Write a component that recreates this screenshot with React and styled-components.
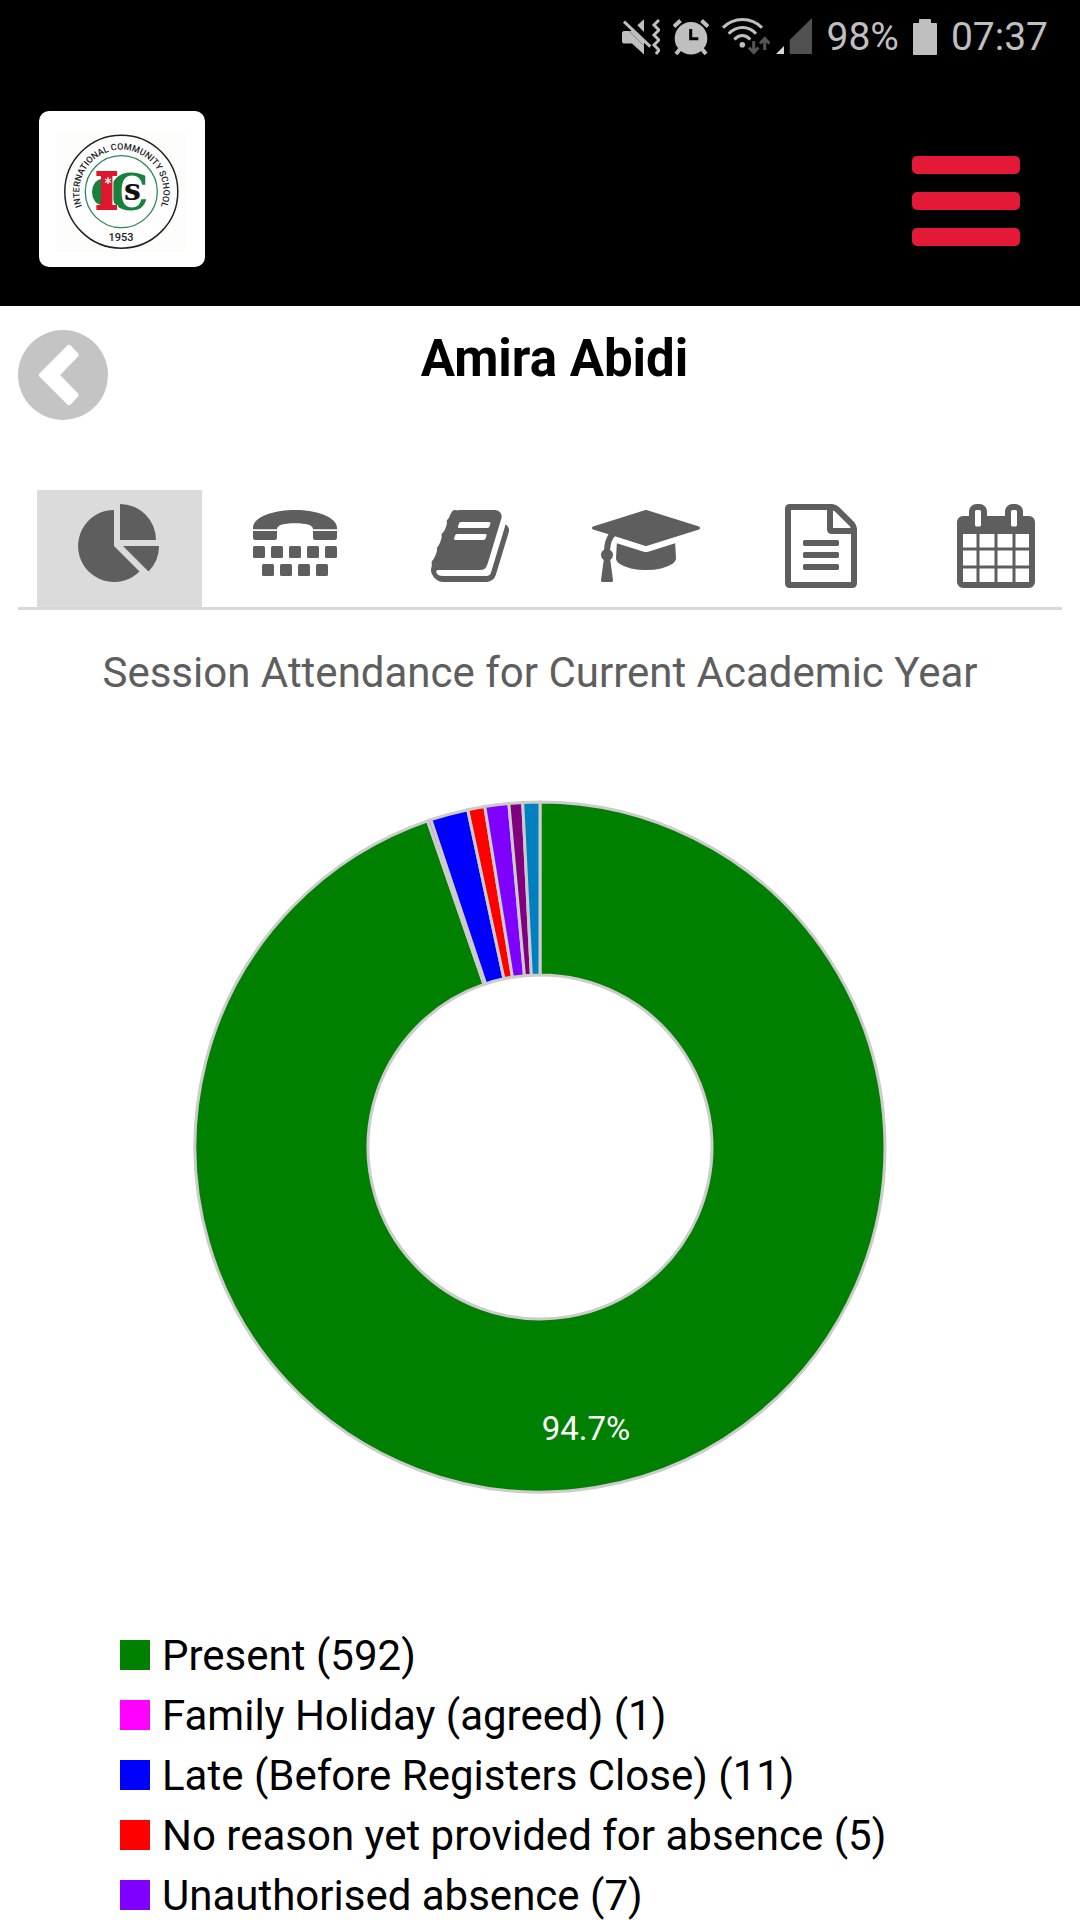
import React, { Component } from 'react';

import styled, { createGlobalStyle, css } from 'styled-components';

const slices = [
  { label: 'Present', count: 592, color: '#008000' },
  { label: 'Family Holiday (agreed)', count: 1, color: '#ff00ff' },
  { label: 'Late (Before Registers Close)', count: 11, color: '#0000ff' },
  { label: 'No reason yet provided for absence', count: 5, color: '#ff0000' },
  { label: 'Unauthorised absence', count: 7, color: '#7f00ff' },
  { count: 4, color: '#800080' },
  { count: 5, color: '#0080c0' },
];

const OUTER = 345;
const INNER = 172;

const point = (r, turn) => {
  const a = turn * 2 * Math.PI;
  return `${(r * Math.sin(a)).toFixed(2)} ${(-r * Math.cos(a)).toFixed(2)}`;
};

const ringPath = (from, to) => {
  const large = to - from > 0.5 ? 1 : 0;
  return `M${point(OUTER, from)} A${OUTER} ${OUTER} 0 ${large} 1 ${point(OUTER, to)}
    L${point(INNER, to)} A${INNER} ${INNER} 0 ${large} 0 ${point(INNER, from)} Z`;
};

const MuteIcon = () => (
  <svg width="38" height="38" viewBox="0 0 38 38" fill="#bfbfbf" aria-hidden="true">
    <path d="M1.5 13H7L22 28v8.5L10 25.5H1.5L0 24V14.5z" />
    <path d="M7 13l15 15V23L12 13z" />
    <path d="M22 1.3V14l-6.7-6.7z" />
    <path d="M2 3.7l26.3 25" stroke="#bfbfbf" strokeWidth="3" />
    <path d="M37 2l-5 5 5 5-5 5 5 5-5 5 5 5-3 4" fill="none" stroke="#bfbfbf" strokeWidth="3" />
  </svg>
);

const AlarmIcon = () => (
  <svg width="36" height="38" viewBox="0 0 36 38" aria-hidden="true">
    <circle cx="18" cy="20.3" r="16.3" fill="#bfbfbf" />
    <path d="M1 8.5l6.5-6M28.5 2.5l6.5 6M7 31l-4 5M29 31l4 5" stroke="#bfbfbf" strokeWidth="4" />
    <path d="M17.7 11v9.7h7.6" fill="none" stroke="#000" strokeWidth="3" />
  </svg>
);

const WifiIcon = () => (
  <svg width="48" height="38" viewBox="0 0 48 38" fill="none" aria-hidden="true">
    <path
      d="M1 9.7Q9 1.5 20.5 1.5T40 9.7M6.7 15.7Q12.5 9.5 20.5 9.5T34 15.7M12.3 21.5Q16 17.5 20.3 17.5T28.3 21.5"
      stroke="#bfbfbf"
      strokeWidth="3"
    />
    <circle cx="20.3" cy="26.7" r="2.8" fill="#bfbfbf" />
    <path d="M31.7 23v11M27 29.5l4.7 5 4.7-5M42.7 32V21M38 25.5l4.7-5 4.7 5" stroke="#555" strokeWidth="3" />
  </svg>
);

const SignalIcon = () => (
  <svg width="36" height="38" viewBox="0 0 36 38" aria-hidden="true">
    <path d="M0 36h8v-8z" fill="#d8d8d8" />
    <path d="M13.7 36V22L36 0v36z" fill="#505050" />
  </svg>
);

const BatteryIcon = () => (
  <svg width="24" height="38" viewBox="0 0 24 38" fill="#bfbfbf" aria-hidden="true">
    <rect y="5" width="24" height="32" rx="1" />
    <rect x="6" y="1" width="12" height="6" rx="1" />
  </svg>
);

const SchoolLogo = () => (
  <svg width="166" height="156" viewBox="0 0 166 156" role="img" aria-label="International Community School">
    <defs>
      <path id="motto" d="M82.3 122.7a42 42 0 1 1 .1 0" />
    </defs>
    <rect x="18" y="20" width="128" height="121" fill="#fdfdfb" />
    <circle cx="82.3" cy="80.7" r="56.5" fill="#fff" stroke="#222" strokeWidth="1.5" />
    <circle cx="82.3" cy="80.7" r="36" fill="#fff" stroke="#2f8a58" strokeWidth="1.3" />
    <Motto>
      <textPath href="#motto" startOffset="50%">INTERNATIONAL COMMUNITY SCHOOL</textPath>
    </Motto>
    <Year x="82" y="130">1953</Year>
    <ellipse cx="63" cy="81" rx="10" ry="13" fill="#17823c" />
    <Initial x="70" y="99" $size={50} $color="#17823c">C</Initial>
    <Initial x="56" y="98" $size={50} $color="#e0162f" $heavy>I</Initial>
    <Initial x="85" y="89" $size={30} $color="#111111">s</Initial>
    <path d="M69 66v7M66 68l6 3.5M72 68l-6 3.5" stroke="#fff" strokeWidth="1.3" />
  </svg>
);

const ChevronIcon = () => (
  <svg width="90" height="90" viewBox="0 0 90 90" aria-hidden="true">
    <path d="M24 45l27-27 6.5 7L38 45l19.5 20-6.5 7z" fill="#fff" stroke="#fff" strokeWidth="6" strokeLinejoin="round" />
  </svg>
);

const PieIcon = () => (
  <svg width="108" height="84" viewBox="0 0 108 84" fill="currentColor" aria-hidden="true">
    <path d="M48 42V6a36 36 0 1 0 25.5 61.5z" />
    <path d="M54 0a36 36 0 0 1 36 36H54z" />
    <path d="M57 42h36a36 36 0 0 1-10.5 25.5z" />
  </svg>
);

const TtyIcon = () => (
  <svg width="84" height="84" viewBox="12 0 84 84" fill="currentColor" aria-hidden="true">
    <path d="M12 25.3V23C13 13 32 6 54 6s41 7 42 17v2.3H72c0-4-6-6-18-6s-18 2-18 6z" />
    <path d="M12 27h24v6.5q0 2.5-2.5 2.5h-19Q12 36 12 33.5zM72 27h24v6.5q0 2.5-2.5 2.5h-19Q72 36 72 33.5z" />
    {[12, 30, 48, 66, 84].map(x => <rect key={x} x={x} y="42" width="12" height="12" rx="1.5" />)}
    {[21, 39, 57, 75].map(x => <rect key={x} x={x} y="60" width="12" height="12" rx="1.5" />)}
  </svg>
);

const BookIcon = () => (
  <svg width="78" height="84" viewBox="0 0 1664 1792" fill="currentColor" aria-hidden="true">
    <path d="M1639 478q40 57 18 129l-275 906q-19 64-76.5 107.5t-122.5 43.5h-923q-77 0-148.5-53.5t-99.5-131.5q-24-67-2-127 0-4 3-27t4-37q1-8-3-21.5t-3-19.5q2-11 8-21t16.5-23.5 16.5-23.5q23-38 45-91.5t30-91.5q3-10 .5-30t-.5-28q3-11 17-28t17-23q21-36 42-92t25-90q1-9-2.5-32t.5-28q4-13 22-30.5t22-22.5q19-26 42.5-84.5t27.5-96.5q1-8-3-25.5t-2-26.5q2-8 9-18t18-23 17-21q8-12 16.5-30.5t15-35 16-36 19.5-32 26.5-23.5 36-11.5 47.5 5.5l-1 3q38-9 51-9h761q74 0 114 56t18 130l-274 906q-36 119-71.5 153.5t-128.5 34.5h-869q-27 0-38 15-11 16-1 43 24 70 144 70h923q29 0 56-15.5t35-41.5l300-987q7-22 5-57 38 15 59 43zm-1064 2q-4 13 2 22.5t20 9.5h608q13 0 25.5-9.5t16.5-22.5l21-64q4-13-2-22.5t-20-9.5h-608q-13 0-25.5 9.5t-16.5 22.5zm-83 256q-4 13 2 22.5t20 9.5h608q13 0 25.5-9.5t16.5-22.5l21-64q4-13-2-22.5t-20-9.5h-608q-13 0-25.5 9.5t-16.5 22.5z" />
  </svg>
);

const CapIcon = () => (
  <svg width="108" height="84" viewBox="0 0 2304 1792" fill="currentColor" aria-hidden="true">
    <path d="M1774 836l18 316q4 69-82 128t-235 93.5-323 34.5-323-34.5-235-93.5-82-128l18-316 574 181q22 7 48 7t48-7zm530-324q0 23-22 31l-1120 352q-4 1-10 1t-10-1l-652-206q-43 34-71 111.5t-34 178.5q63 36 63 109 0 69-58 107l58 433q2 14-8 25-9 11-24 11h-192q-15 0-24-11-10-11-8-25l58-433q-58-38-58-107 0-73 65-111 11-207 98-330l-333-104q-22-8-22-31t22-31l1120-352q4-1 10-1t10 1l1120 352q22 8 22 31z" />
  </svg>
);

const FileIcon = () => (
  <svg width="72" height="84" viewBox="0 0 1536 1792" fill="currentColor" aria-hidden="true">
    <path d="M1468 380q28 28 48 76t20 88v1152q0 40-28 68t-68 28h-1344q-40 0-68-28t-28-68v-1600q0-40 28-68t68-28h896q40 0 88 20t76 48zm-444-244v376h376q-10-29-22-41l-313-313q-12-12-41-22zm384 1528v-1024h-416q-40 0-68-28t-28-68v-416h-768v1536h1280zm-1024-864q0-14 9-23t23-9h704q14 0 23 9t9 23v64q0 14-9 23t-23 9h-704q-14 0-23-9t-9-23v-64zm736 224q14 0 23 9t9 23v64q0 14-9 23t-23 9h-704q-14 0-23-9t-9-23v-64q0-14 9-23t23-9h704zm0 256q14 0 23 9t9 23v64q0 14-9 23t-23 9h-704q-14 0-23-9t-9-23v-64q0-14 9-23t23-9h704z" />
  </svg>
);

const CalendarIcon = () => (
  <svg width="78" height="84" viewBox="0 0 1664 1792" fill="currentColor" aria-hidden="true">
    <path d="M128 1664h288v-288h-288v288zm352 0h320v-288h-320v288zm-352-352h288v-320h-288v320zm352 0h320v-320h-320v320zm-352-384h288v-288h-288v288zm736 736h320v-288h-320v288zm-384-736h320v-288h-320v288zm768 736h288v-288h-288v288zm-384-352h320v-320h-320v320zm-352-864v-288q0-13-9.5-22.5t-22.5-9.5h-64q-13 0-22.5 9.5t-9.5 22.5v288q0 13 9.5 22.5t22.5 9.5h64q13 0 22.5-9.5t9.5-22.5zm736 864h288v-320h-288v320zm-384-384h320v-288h-320v288zm384 0h288v-288h-288v288zm32-480v-288q0-13-9.5-22.5t-22.5-9.5h-64q-13 0-22.5 9.5t-9.5 22.5v288q0 13 9.5 22.5t22.5 9.5h64q13 0 22.5-9.5t9.5-22.5zm384-64v1280q0 52-38 90t-90 38h-1408q-52 0-90-38t-38-90v-1280q0-52 38-90t90-38h128v-96q0-66 47-113t113-47h64q66 0 113 47t47 113v96h384v-96q0-66 47-113t113-47h64q66 0 113 47t47 113v96h128q52 0 90 38t38 90z" />
  </svg>
);

const tabs = [
  { name: 'Attendance', Icon: PieIcon },
  { name: 'Contacts', Icon: TtyIcon },
  { name: 'Homework', Icon: BookIcon },
  { name: 'Assessment', Icon: CapIcon },
  { name: 'Reports', Icon: FileIcon },
  { name: 'Calendar', Icon: CalendarIcon },
];

const DonutChart = ({ data }) => {
  const total = data.reduce((sum, s) => sum + s.count, 0);
  let turn = 0;

  return (
    <Chart viewBox="-347 -347 694 694" role="img" aria-label="Session attendance">
      {data.map(s => {
        const from = turn;
        turn += s.count / total;
        return <path key={s.color} d={ringPath(from, turn)} fill={s.color} stroke="#cccccc" strokeWidth="3" />;
      })}
      <ChartLabel x="46" y="293">{(data[0].count / total * 100).toFixed(1)}%</ChartLabel>
    </Chart>
  );
};

export default class App extends Component {
  constructor(props) {
    super(props);

    this.state = {
      tab: 'Attendance'
    };
  }

  handleTab = name => {
    this.setState({ tab: name });
  };

  render() {
    const { tab } = this.state;
    return (
      <>
        <GlobalStyle />
        <TopBar>
          <StatusBar>
            <StatusIcons>
              <MuteIcon />
              <AlarmIcon />
              <WifiIcon />
            </StatusIcons>
            <SignalIcon />
            <span>98%</span>
            <BatteryIcon />
            <span>07:37</span>
          </StatusBar>
          <Brand>
            <LogoLink href="#home"><SchoolLogo /></LogoLink>
            <MenuButton type="button" aria-label="Menu">
              <Bar /><Bar /><Bar />
            </MenuButton>
          </Brand>
        </TopBar>
        <main>
          <StudentRow>
            <BackButton type="button" aria-label="Back"><ChevronIcon /></BackButton>
            <StudentName>Amira Abidi</StudentName>
          </StudentRow>
          <TabNav>
            <TabList>
              {tabs.map(({ name, Icon }) => (
                <Tab
                  key={name}
                  type="button"
                  aria-label={name}
                  aria-pressed={tab === name}
                  $active={tab === name}
                  onClick={() => this.handleTab(name)}
                >
                  <Icon />
                </Tab>
              ))}
            </TabList>
          </TabNav>
          <ChartTitle>Session Attendance for Current Academic Year</ChartTitle>
          <DonutChart data={slices} />
          <Legend>
            {slices.filter(s => s.label).map(s => (
              <LegendItem key={s.label}>
                <Swatch $color={s.color} />
                {s.label} ({s.count})
              </LegendItem>
            ))}
          </Legend>
        </main>
      </>
    );
  }
}

//CSS
const GlobalStyle = createGlobalStyle`
  * {
    box-sizing: border-box;
  }

  body {
    margin: 0;
    background: #ffffff;
    color: #000000;
    font-family: Roboto, 'Liberation Sans', sans-serif;
    overflow-x: hidden;
  }

  svg {
    display: block;
    flex-shrink: 0;
  }
`;

const plainButton = css`
  margin: 0;
  padding: 0;
  border: 0;
  background: none;
  cursor: pointer;
`;

const TopBar = styled.header`
  background: #000000;
  padding-bottom: 39px;
`;

const StatusBar = styled.div`
  display: flex;
  justify-content: flex-end;
  align-items: center;
  gap: 14px;
  height: 74px;
  padding-right: 32px;
  color: #bfbfbf;
  font-size: 39px;
`;

const StatusIcons = styled.div`
  display: flex;
  gap: 13px;
  margin-right: -8px;
`;

const Brand = styled.div`
  display: flex;
  justify-content: space-between;
  align-items: center;
  padding: 37px 60px 0 39px;
`;

const LogoLink = styled.a`
  background: #ffffff;
  border-radius: 10px;
  overflow: hidden;
`;

const Motto = styled.text`
  fill: #222222;
  font-size: 9px;
  font-weight: 500;
  text-anchor: middle;
`;

const Year = styled.text`
  fill: #222222;
  font-size: 11px;
  font-weight: 500;
  text-anchor: middle;
`;

const Initial = styled.text`
  fill: ${props => props.$color};
  font-family: 'DejaVu Serif', serif;
  font-size: ${props => props.$size}px;
  font-weight: 700;
  stroke: ${props => props.$heavy ? props.$color : '#ffffff'};
  stroke-width: 2px;
  paint-order: stroke;
  filter: ${props => props.$heavy ? 'drop-shadow(1px 0 0 #ffffff)' : 'none'};
`;

const MenuButton = styled.button`
  ${plainButton}
  display: flex;
  flex-direction: column;
  gap: 18px;
  width: 108px;
  padding-top: 24px;
`;

const Bar = styled.span`
  height: 18px;
  border-radius: 5px;
  background: #e31937;
`;

const StudentRow = styled.div`
  display: flex;
  align-items: flex-start;
  padding: 24px 79px 0 18px;
`;

const BackButton = styled.button`
  ${plainButton}
  width: 90px;
  height: 90px;
  border-radius: 50%;
  background: #c4c4c4;
`;

const StudentName = styled.h1`
  flex: 1;
  margin: 0;
  font-size: 51px;
  font-weight: 700;
  line-height: 58px;
  text-align: center;
`;

const TabNav = styled.nav`
  margin: 70px 18px 0;
  border-bottom: 3px solid #d8d8d8;
`;

const TabList = styled.div`
  display: flex;
  gap: 10px;
  margin: 0 -17px 0 19px;
`;

const Tab = styled.button`
  ${plainButton}
  display: flex;
  flex: 1 1 0;
  justify-content: center;
  padding: 14px 0 19px;
  background: ${props => props.$active ? '#dbdbdb' : 'transparent'};
  color: #5e5e5e;
`;

const ChartTitle = styled.h2`
  margin: 38px 0 102px;
  color: #5e5e5e;
  font-size: 42px;
  font-weight: 400;
  line-height: 50px;
  text-align: center;
`;

const Chart = styled.svg`
  width: 694px;
  max-width: 100%;
  margin: 0 auto;
`;

const ChartLabel = styled.text`
  fill: #ffffff;
  font-size: 33px;
  text-anchor: middle;
`;

const Legend = styled.ul`
  display: flex;
  flex-direction: column;
  gap: 12px;
  margin: 138px 0 0;
  padding: 0 0 0 120px;
  list-style: none;
`;

const LegendItem = styled.li`
  display: flex;
  align-items: baseline;
  gap: 12px;
  font-size: 42px;
  line-height: 48px;
`;

const Swatch = styled.span`
  width: 30px;
  height: 30px;
  background: ${props => props.$color};
`;
